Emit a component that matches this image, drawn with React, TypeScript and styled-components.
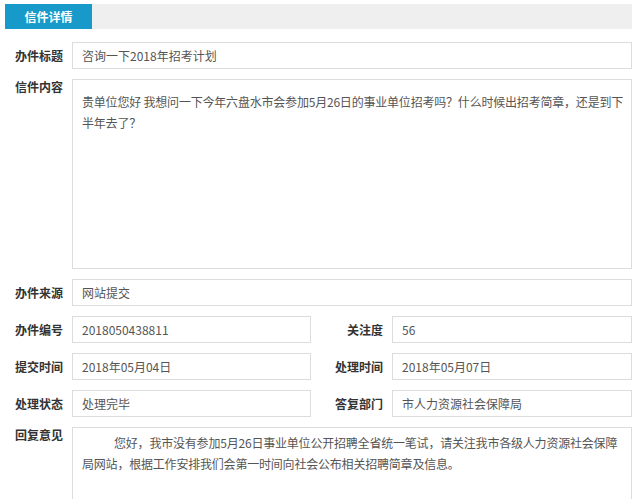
import React from "react";
import styled, { createGlobalStyle } from "styled-components";

const Global = createGlobalStyle`
  html, body { margin: 0; padding: 0; background: #fff; }
  body { font-family: "Noto Sans CJK SC", "Noto Sans", sans-serif; }
`;

const Page = styled.div`
  padding: 4px 8px 0 5px;
  width: 640px;
  box-sizing: border-box;
`;

const TabBar = styled.div`
  display: flex;
  height: 25px;
  background: #efefef;
`;

const Tab = styled.div`
  width: 87px;
  display: flex;
  align-items: center;
  justify-content: center;
  background: #1799c9;
  color: #fff;
  font-size: 12px;
  font-weight: 700;
`;

const Form = styled.div`
  display: grid;
  grid-template-columns: 67px 239px 81px 240px;
  row-gap: 10px;
  margin-top: 13px;
  margin-left: -5px;
  padding-left: 5px;
`;

const Label = styled.div<{ $top?: boolean }>`
  font-size: 12px;
  font-weight: 700;
  color: #333;
  text-align: right;
  padding-right: 9px;
  white-space: nowrap;
  line-height: ${(p) => (p.$top ? "16px" : "27px")};
`;

const Field = styled.div<{ $span?: boolean; $height?: number }>`
  grid-column: ${(p) => (p.$span ? "span 3" : "auto")};
  box-sizing: border-box;
  height: ${(p) => p.$height ?? 27}px;
  border: 1px solid #dcdcdc;
  background: #fff;
  padding: 0 9px;
  font-size: 12px;
  line-height: 25px;
  color: #555;
  overflow: hidden;
`;

const Paragraph = styled.p<{ $indent?: boolean }>`
  margin: 0;
  line-height: 21px;
  letter-spacing: -0.2px;
  white-space: nowrap;
  text-indent: ${(p) => (p.$indent ? "32px" : "0")};
  padding-top: ${(p) => (p.$indent ? "4px" : "11px")};
`;

export default function App() {
  return (
    <>
      <Global />
      <Page>
        <TabBar>
          <Tab>信件详情</Tab>
        </TabBar>
        <Form>
          <Label>办件标题</Label>
          <Field $span>咨询一下2018年招考计划</Field>

          <Label $top>信件内容</Label>
          <Field $span $height={190}>
            <Paragraph>
              贵单位您好 我想问一下今年六盘水市会参加5月26日的事业单位招考吗？什么时候出招考简章，还是到下
              <br />
              半年去了？
            </Paragraph>
          </Field>

          <Label>办件来源</Label>
          <Field $span>网站提交</Field>

          <Label>办件编号</Label>
          <Field>2018050438811</Field>
          <Label>关注度</Label>
          <Field>56</Field>

          <Label>提交时间</Label>
          <Field>2018年05月04日</Field>
          <Label>处理时间</Label>
          <Field>2018年05月07日</Field>

          <Label>处理状态</Label>
          <Field>处理完毕</Field>
          <Label>答复部门</Label>
          <Field>市人力资源社会保障局</Field>

          <Label $top>回复意见</Label>
          <Field $span $height={120}>
            <Paragraph $indent>
              您好，我市没有参加5月26日事业单位公开招聘全省统一笔试，请关注我市各级人力资源社会保障
              <br />
              局网站，根据工作安排我们会第一时间向社会公布相关招聘简章及信息。
            </Paragraph>
          </Field>
        </Form>
      </Page>
    </>
  );
}
